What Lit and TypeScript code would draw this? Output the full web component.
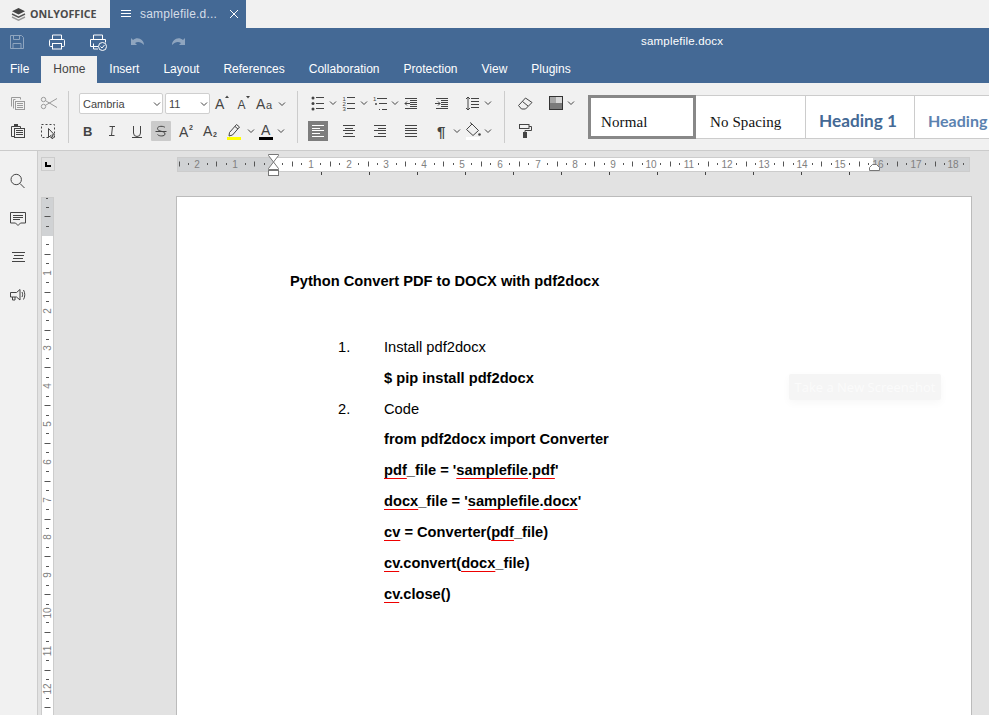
import { LitElement, html, css, svg } from "lit";
import { customElement } from "lit/decorators.js";

const CM = 37.8;

const box = (body: unknown, size = 20) =>
  html`<svg class="ic" width="${size}" height="${size}" viewBox="0 0 20 20">${body}</svg>`;

const lines = (rows: [number, number, number][]) =>
  svg`${rows.map(([x1, x2, y]) => svg`<path d="M${x1} ${y}.5H${x2}" />`)}`;

const letter = (t: string, x: number, y: number, size: number, extra = "") =>
  svg`<text x="${x}" y="${y}" font-size="${size}" class="${extra}">${t}</text>`;

const icons = {
  copy: box(svg`<path d="M3.500 13.500v-9h9v2" /><path d="M5.500 15.500v-9h2" /><rect x="7.500" y="8.500" width="9" height="8" />${lines([[9, 15, 10], [9, 15, 12], [9, 15, 14]])}`),
  cut: box(svg`<circle cx="5.500" cy="6.500" r="2.200" /><circle cx="5.500" cy="13.500" r="2.200" /><path d="M7.500 7.700 19 14.500M7.500 12.300 19 5.500" />`),
  paste: box(svg`<path d="M6 15.500H3.500V5.500h9v2" /><rect x="6" y="3" width="4" height="3" class="fill nostroke" /><rect x="6.500" y="7.500" width="10" height="9" />${lines([[8, 15, 9], [8, 15, 11], [8, 15, 13]])}`),
  select: box(svg`<rect x="3.500" y="3.500" width="13" height="13" stroke-dasharray="2 2" /><path d="M10.500 7.500v9l2-2 1.500 3.200 1.400-.7-1.500-3.100h2.600z" fill="#f1f1f1" />`),
  grow: box(svg`${letter("A", 4, 15, 14)}<path d="M14 4h4l-2-2.500z" class="fill nostroke" />`),
  shrink: box(svg`${letter("A", 4.500, 15, 12)}<path d="M13 2h4l-2 2.500z" class="fill nostroke" />`),
  change: box(svg`${letter("A", 1, 15, 14)}${letter("a", 11, 15, 11)}`),
  bold: box(svg`${letter("B", 5, 15, 13, "b")}`),
  italic: box(svg`<path d="M7.500 5.500h5.500M7 14.500h5.500M10.500 5.500l-1 9" />`),
  under: box(svg`<path d="M6.500 5v7a3.500 3.500 0 0 0 7 0V5M5 16.500h10" />`),
  strike: box(svg`<path d="M14 6.500c-1-1.500-7.500-2-7.500 1 0 3.500 7.500 2 7.500 5.500 0 2.500-6 2.500-7.500.5M4.500 10.500h11" />`),
  sup: box(svg`${letter("A", 4, 16, 14)}${letter("2", 14, 9, 7, "b")}`),
  sub: box(svg`${letter("A", 3, 15, 14)}${letter("2", 13, 16, 7, "b")}`),
  hi: box(svg`<path d="m5.500 11.500 7-8 3 2.500-7 8-3.500 1z" /><path d="m11 5.500 3 2.500" /><path d="M3 16h14v3H3z" fill="#ffff00" stroke="none" />`),
  color: box(svg`${letter("A", 5, 14, 14)}<path d="M3 16h14v3H3z" fill="#000" stroke="none" />`),
  bullets: box(svg`<circle cx="5" cy="5" r="1.500" class="fill nostroke" /><circle cx="5" cy="10.500" r="1.500" class="fill nostroke" /><circle cx="5" cy="16" r="1.500" class="fill nostroke" />${lines([[8, 16, 4], [8, 16, 10], [8, 16, 15]])}`),
  numbers: box(svg`${letter("1", 3.500, 8, 6)}${letter("2", 3.500, 13, 6)}${letter("3", 3.500, 18, 6)}${lines([[8, 16, 4], [8, 16, 10], [8, 16, 15]])}`),
  multi: box(svg`${letter("1", 3, 8, 6)}<circle cx="6" cy="11" r="1" class="fill nostroke" /><path d="M9 16.500h1" />${lines([[7, 17, 5], [9, 17, 10], [12, 17, 16]])}`),
  outdent: box(svg`${lines([[4, 16, 5], [9, 16, 7], [9, 16, 9], [9, 16, 11], [9, 16, 13], [4, 16, 15]])}<path d="M9 10.500H4M6 8.500l-2 2 2 2" />`),
  indent: box(svg`${lines([[4, 16, 5], [9, 16, 7], [9, 16, 9], [9, 16, 11], [9, 16, 13], [4, 16, 15]])}<path d="M3 10.500h5M6 8.500l2 2-2 2" />`),
  spacing: box(svg`${lines([[8, 16, 5], [8, 16, 8], [8, 16, 11], [8, 16, 14]])}<path d="M5 4v13M3 6l2-2 2 2M3 15l2 2 2-2" />`),
  left: box(svg`${lines([[4, 16, 4], [4, 12, 7], [4, 16, 9], [4, 12, 12], [4, 16, 15]])}`),
  center: box(svg`${lines([[4, 16, 4], [6, 14, 7], [4, 16, 9], [6, 14, 12], [4, 16, 15]])}`),
  right: box(svg`${lines([[4, 16, 4], [8, 16, 7], [4, 16, 9], [8, 16, 12], [4, 16, 15]])}`),
  justify: box(svg`${lines([[4, 16, 4], [4, 16, 7], [4, 16, 9], [4, 16, 12], [4, 16, 15]])}`),
  para: box(svg`${letter("¶", 5, 16, 15, "b")}`),
  shade: box(svg`<path d="m9 3 6.500 6.500-5.500 5-6.500-6z" /><path d="M9 3 7 1.500" /><circle cx="16.500" cy="13.500" r="1.300" class="fill nostroke" /><path d="M3 16h14v3H3z" fill="#fff" stroke="none" />`),
  eraser: box(svg`<path d="m3.500 12.500 7-7.500 6.500 4.500-6.500 6.500H6.500z" /><path d="m7.500 8.500 5.500 4.500" />`),
  scheme: box(svg`<rect x="3.500" y="3.500" width="13" height="13" stroke="#333" /><path d="M4 4h6v6H4z" fill="#a8a8a8" stroke="none" /><path d="M10 4h6v6h-6z" fill="#d8d8d8" stroke="none" /><path d="M4 10h12v6H4z" fill="#7a7a7a" stroke="none" />`),
  roller: box(svg`<rect x="4.500" y="3.500" width="9.500" height="4" /><path d="M14 5.500h2.500v4H10V11" /><rect x="8" y="11" width="4" height="6" class="fill nostroke" />`),
  search: box(svg`<circle cx="9.200" cy="8.500" r="5.200" /><path d="m13 12.500 4.500 4.500" />`),
  comment: box(svg`<path d="M3.500 3.500h15v10.500h-5l-2.500 2.500-2.500-2.500h-5z" />${lines([[6, 16, 6], [6, 16, 8], [6, 13, 10]])}`),
  nav: box(svg`${lines([[5, 18, 5], [7, 17, 8], [6, 16, 11], [5, 18, 14]])}`),
  speaker: box(svg`<path d="M3.500 7.500h6l3.500-3v10.500l-3.500-3h-6zM5.500 12v3H8v-3" /><path d="M15 7c.8 1.500.8 3.500 0 5M16.500 5c1.700 3 1.700 6.500 0 9.500" />`),
};

const topIcons = {
  save: box(svg`<path d="M3.500 3.500h11l2 2v11h-13z" /><path d="M6.500 3.500v4h6v-4M6 16.500v-5h8v5" />`),
  print: box(svg`<path d="M5.500 7V3h9v4" /><rect x="2.500" y="7.500" width="15" height="7" rx="1" /><rect x="5.500" y="11.500" width="9" height="5.500" fill="#446995" />`),
  quick: box(svg`<path d="M5.500 7V3h9v4" /><path d="M10 14.500H2.500v-7h15v3" /><path d="M5.500 11.500v5.500H10" /><circle cx="14.500" cy="14.500" r="4" /><path d="m12.500 14.500 1.500 1.500 2.500-3" />`),
  undo: box(svg`<path d="M3 6v7h6L7 11c3-2 6-1 9 2 0-5-6-9-11-5z" class="solid" />`),
  redo: box(svg`<path d="M17 6v7h-6l2-2c-3-2-6-1-9 2 0-5 6-9 11-5z" class="solid" />`),
};

const caret = html`<svg class="caret" width="10" height="20" viewBox="0 0 10 20"><path d="M2 8.500l3 3 3-3" /></svg>`;

const tabs = ["File", "Home", "Insert", "Layout", "References", "Collaboration", "Protection", "View", "Plugins"];

function hruler() {
  const ox = 96;
  const marks = [];
  for (let q = -10; q <= 74; q++) {
    const x = ox + (q * CM) / 4;
    if (x < 0.5 || x > 792) continue;
    if (q % 4 === 0) {
      if (q !== 0) marks.push(svg`<text x="${Math.round(x)}" y="15" class="num">${Math.abs(q / 4)}</text>`);
    } else {
      const h = q % 2 === 0 ? 5 : 2;
      marks.push(svg`<rect x="${Math.round(x)}" y="${11 - h / 2}" width="1" height="${h}" class="tick" />`);
    }
  }
  const stops = [];
  for (let i = 1; i <= 12; i++) stops.push(svg`<rect x="${ox + 48 * i}" y="19" width="1" height="3" class="stop" />`);
  return html`<svg class="hruler" width="794" height="25" viewBox="0 0 794 25">
    <rect x="0.500" y="4.500" width="792" height="14" class="gray" />
    <rect x="${ox}" y="5" width="600" height="13" fill="#fff" />
    ${marks}${stops}
    <path d="M91.500 1.500h10v1l-5 6.500-5-6.500z M91.500 16.500v-1l5-6.500 5 6.500v1z" class="marker" />
    <rect x="91.500" y="17.500" width="10" height="5" class="marker" />
    <path d="M692.500 17.500v-3l3-3h4l3 3v3z" class="marker" />
  </svg>`;
}

function vruler() {
  const oy = 38;
  const marks = [];
  for (let q = -3; q <= 51; q++) {
    const y = oy + (q * CM) / 4;
    if (q % 4 === 0) {
      if (q > 0 && q <= 48) marks.push(svg`<text transform="translate(10 ${Math.round(y)}) rotate(-90)" class="num">${q / 4}</text>`);
    } else {
      const w = q % 2 === 0 ? 6 : 3;
      marks.push(svg`<rect x="${6.500 - w / 2}" y="${Math.round(y)}" width="${w}" height="1" class="tick" />`);
    }
  }
  return html`<svg class="vruler" width="13" height="520" viewBox="0 0 13 520">
    <rect x="0.500" y="0.500" width="12" height="530" class="gray" />
    <rect x="1" y="${oy + 1}" width="11" height="500" fill="#fff" />
    <rect x="5" y="1" width="2" height="1" class="tick" />
    ${marks}
  </svg>`;
}

@customElement("app-root")
export class AppRoot extends LitElement {
  static styles = css`
    :host {
      display: block;
      width: 989px;
      height: 715px;
      overflow: hidden;
      position: relative;
      font-family: "Liberation Sans", Arial, sans-serif;
      font-size: 12px;
      color: #444;
      background: #e2e2e2;
    }
    .ic {
      display: block;
      flex: none;
      fill: none;
      stroke: #444;
      stroke-width: 1;
    }
    .ic text {
      fill: #444;
      stroke: none;
      font-family: "Liberation Sans", sans-serif;
    }
    .ic text.b {
      font-weight: 700;
    }
    .ic .fill {
      fill: #444;
    }
    .ic .nostroke {
      stroke: none;
    }
    .caret {
      display: block;
      flex: none;
      fill: none;
      stroke: #444;
    }

    .tabbar {
      height: 28px;
      display: flex;
      background: #f1f1f1;
    }
    .logo {
      width: 110px;
      display: flex;
      align-items: center;
      gap: 4px;
      padding-left: 11px;
      box-sizing: border-box;
      font: 700 10.700px "Open Sans", sans-serif;
      color: #4a4a4a;
    }
    .doctab {
      width: 136px;
      display: flex;
      align-items: center;
      padding-left: 11px;
      box-sizing: border-box;
      background: #446995;
      color: #d5dde8;
    }
    .doctab .name {
      width: 78px;
      margin-left: 9px;
      letter-spacing: 0.2px;
    }
    .doctab svg {
      stroke: #fff;
      fill: none;
      display: block;
    }
    .doctab .close {
      margin-left: 11px;
    }

    .titlebar {
      height: 28px;
      background: #446995;
      display: flex;
      align-items: center;
      position: relative;
      padding-left: 7px;
      gap: 20.300px;
    }
    .titlebar .ic {
      stroke: #fff;
    }
    .titlebar .off {
      opacity: 0.4;
    }
    .titlebar .solid {
      fill: #fff;
      stroke: none;
    }
    .doc-title {
      position: absolute;
      left: 641px;
      top: 7px;
      color: #fff;
      font-size: 11.500px;
      letter-spacing: 0.2px;
    }

    .menu {
      height: 27px;
      background: #446995;
      display: flex;
    }
    .menu div {
      padding: 0 12px;
      line-height: 27px;
      color: #fff;
    }
    .menu div:first-child {
      padding: 0 12px 0 10px;
    }
    .menu .on {
      background: #f1f1f1;
      color: #444;
    }

    .toolbar {
      height: 57px;
      padding-top: 10px;
      background: #f1f1f1;
      border-bottom: 1px solid #cbcbcb;
      display: flex;
      align-items: flex-start;
      overflow: hidden;
    }
    .sep {
      width: 1px;
      height: 52px;
      margin-top: -2px;
      background: #ccc;
      flex: none;
    }
    .clip {
      display: grid;
      grid-template-columns: 30px 30px;
      row-gap: 8px;
      margin: 0 5px 0 3px;
      justify-items: center;
    }
    .clip .dim .ic {
      stroke: #9a9a9a;
    }
    .fontgroup {
      margin-left: 10px;
      width: 218px;
      flex: none;
    }
    .row {
      display: flex;
      align-items: center;
    }
    .row.one {
      height: 21px;
      margin-bottom: 7px;
    }
    .combo {
      height: 21px;
      box-sizing: border-box;
      border: 1px solid #cfcfcf;
      border-radius: 2px;
      background: #fff;
      display: flex;
      align-items: center;
      justify-content: space-between;
      padding-left: 3px;
      font-size: 11px;
      color: #444;
    }
    .combo.name {
      width: 84px;
      margin-right: 2px;
    }
    .combo.size {
      width: 45px;
      margin-right: 1px;
    }
    .row.one > .ic {
      margin-right: 2px;
    }
    .row.one > .ic:last-of-type {
      margin-right: 0;
    }
    .row.two {
      margin-left: -3px;
    }
    .row.two .cell {
      width: 24.300px;
      display: flex;
      justify-content: center;
      flex: none;
    }
    .row.two .on .ic {
      background: #cbcbcb;
      border-radius: 1px;
    }
    .paragraph {
      display: grid;
      grid-template-columns: repeat(6, 31px);
      row-gap: 8px;
      margin: 0 10px;
      flex: none;
    }
    .cell31 {
      display: flex;
      width: 31px;
    }
    .cell31.on .ic {
      background: #7d7d7d;
      stroke: #fff;
    }
    .extras {
      display: grid;
      grid-template-columns: repeat(2, 31px);
      row-gap: 8px;
      margin-left: 10px;
      flex: none;
    }
    .gallery {
      display: flex;
      flex: none;
      height: 44px;
      margin: 2px 0 0 11px;
      background: #fff;
    }
    .style {
      height: 44px;
      box-sizing: border-box;
      border: 1px solid #ccc;
      border-left: 0;
      padding: 16px 0 0 14px;
      white-space: nowrap;
      overflow: hidden;
      color: #111;
      font: 15px/20px "Liberation Serif", serif;
      letter-spacing: 0.1px;
    }
    .style.active {
      width: 108px;
      border: 3px solid #888;
      padding: 14px 0 0 10px;
    }
    .style.nospace {
      width: 110px;
    }
    .style.h1 {
      width: 109px;
      padding: 15px 0 0 13px;
      color: #446995;
      letter-spacing: 0;
      font: 700 17.200px/20px Lato, sans-serif;
    }
    .style.h2 {
      width: 109px;
      padding: 15px 0 0 13px;
      color: #5b82b0;
      letter-spacing: 0;
      font: 700 16px/20px Lato, sans-serif;
    }

    .main {
      display: flex;
      height: 564px;
    }
    .side {
      width: 37px;
      flex: none;
      background: #f1f1f1;
      border-right: 1px solid #ccc;
      padding-top: 11px;
      box-sizing: content-box;
    }
    .side div {
      height: 38px;
      padding-right: 3px;
      display: flex;
      align-items: center;
      justify-content: center;
    }
    .work {
      flex: 1;
      min-width: 0;
    }
    .hrow {
      height: 43px;
      padding: 2px 0 0 3px;
      display: flex;
    }
    .corner {
      width: 14px;
      height: 14px;
      margin-top: 4px;
      border: 1px solid #ccc;
      box-sizing: border-box;
      position: relative;
      flex: none;
    }
    .corner::after {
      content: "";
      position: absolute;
      left: 3px;
      top: 4px;
      width: 4px;
      height: 3px;
      border-left: 2px solid #000;
      border-bottom: 2px solid #000;
    }
    .hruler {
      margin-left: 122px;
      display: block;
      flex: none;
    }
    .hruler .gray,
    .vruler .gray {
      fill: #d0d2d4;
      stroke: #ccc;
    }
    .num {
      font: 10px "Liberation Sans", sans-serif;
      fill: #808080;
      text-anchor: middle;
    }
    .tick {
      fill: #555;
    }
    .stop {
      fill: #444;
    }
    .marker {
      fill: #fff;
      stroke: #777;
    }
    .vrow {
      display: flex;
      padding-left: 3px;
    }
    .vruler {
      display: block;
      flex: none;
      margin-top: 1px;
    }
    .page {
      margin-left: 122px;
      width: 796px;
      height: 560px;
      flex: none;
      box-sizing: border-box;
      border: 1px solid #bbb;
      background: #fff;
      position: relative;
      padding: 68.500px 0 0 113px;
      font: 700 14.670px/30.900px "Liberation Sans", sans-serif;
      color: #000;
    }
    .title {
      margin-bottom: 35.350px;
    }
    .line {
      display: flex;
      font-weight: 400;
    }
    .line.b {
      font-weight: 700;
    }
    .no {
      width: 46px;
      margin-left: 48px;
      font-weight: 400;
    }
    .sp {
      text-decoration: underline #e00 1px;
      text-underline-offset: 3px;
    }
    .shot {
      position: absolute;
      left: 612px;
      top: 177px;
      width: 152px;
      height: 26px;
      background: #f5f5f5;
      border-radius: 2px;
      box-shadow: 0 3px 8px #f7f7f7;
      color: #fbfbfb;
      font: 13px/26px "Open Sans", sans-serif;
      text-align: center;
      white-space: nowrap;
    }
  `;

  render() {
    return html`
      <div class="tabbar">
        <div class="logo">
          <svg width="15" height="15" viewBox="0 0 15 15">
            <path d="M7.500 1 14 4.200 7.500 7.400 1 4.200z" fill="#444" />
            <path d="M1 7l6.500 3.200L14 7" fill="none" stroke="#555" stroke-width="1.400" />
            <path d="M1 10l6.500 3.200L14 10" fill="none" stroke="#999" stroke-width="1.400" />
          </svg>
          ONLYOFFICE
        </div>
        <div class="doctab">
          <svg width="10" height="10" viewBox="0 0 10 10"><path d="M0 1.500h10M0 4.500h10M0 7.500h10" /></svg>
          <span class="name">samplefile.d...</span>
          <svg class="close" width="10" height="10" viewBox="0 0 10 10"><path d="M1 1l8 8M9 1 1 9" /></svg>
        </div>
      </div>
      <div class="titlebar">
        <span class="off">${topIcons.save}</span>
        <span>${topIcons.print}</span>
        <span>${topIcons.quick}</span>
        <span class="off">${topIcons.undo}</span>
        <span class="off">${topIcons.redo}</span>
        <div class="doc-title">samplefile.docx</div>
      </div>
      <div class="menu">
        ${tabs.map((t) => html`<div class=${t === "Home" ? "on" : ""}>${t}</div>`)}
      </div>
      <div class="toolbar">
        <div class="clip">
          <span class="dim">${icons.copy}</span>
          <span class="dim">${icons.cut}</span>
          ${icons.paste} ${icons.select}
        </div>
        <div class="sep"></div>
        <div class="fontgroup">
          <div class="row one">
            <div class="combo name">Cambria ${caret}</div>
            <div class="combo size">11 ${caret}</div>
            ${icons.grow} ${icons.shrink} ${icons.change} ${caret}
          </div>
          <div class="row two">
            ${[icons.bold, icons.italic, icons.under].map((i) => html`<div class="cell">${i}</div>`)}
            <div class="cell on">${icons.strike}</div>
            <div class="cell">${icons.sup}</div>
            <div class="cell">${icons.sub}</div>
            <div class="cell">${icons.hi}</div>
            ${caret}
            ${icons.color} ${caret}
          </div>
        </div>
        <div class="sep"></div>
        <div class="paragraph">
          <div class="cell31">${icons.bullets}${caret}</div>
          <div class="cell31">${icons.numbers}${caret}</div>
          <div class="cell31">${icons.multi}${caret}</div>
          <div class="cell31">${icons.outdent}</div>
          <div class="cell31">${icons.indent}</div>
          <div class="cell31">${icons.spacing}${caret}</div>
          <div class="cell31 on">${icons.left}</div>
          <div class="cell31">${icons.center}</div>
          <div class="cell31">${icons.right}</div>
          <div class="cell31">${icons.justify}</div>
          <div class="cell31">${icons.para}${caret}</div>
          <div class="cell31">${icons.shade}${caret}</div>
        </div>
        <div class="sep"></div>
        <div class="extras">
          <div class="cell31">${icons.eraser}</div>
          <div class="cell31">${icons.scheme}${caret}</div>
          <div class="cell31">${icons.roller}</div>
        </div>
        <div class="gallery">
          <div class="style active">Normal</div>
          <div class="style nospace">No Spacing</div>
          <div class="style h1">Heading 1</div>
          <div class="style h2">Heading</div>
        </div>
      </div>
      <div class="main">
        <div class="side">
          <div>${icons.search}</div>
          <div>${icons.comment}</div>
          <div>${icons.nav}</div>
          <div>${icons.speaker}</div>
        </div>
        <div class="work">
          <div class="hrow">
            <div class="corner"></div>
            ${hruler()}
          </div>
          <div class="vrow">
            ${vruler()}
            <div class="page">
              <div class="title">Python Convert PDF to DOCX with pdf2docx</div>
              <div class="line"><span class="no">1.</span><span>Install pdf2docx</span></div>
              <div class="line b"><span class="no"></span><span>$ pip install pdf2docx</span></div>
              <div class="line"><span class="no">2.</span><span>Code</span></div>
              <div class="line b"><span class="no"></span><span>from pdf2docx import Converter</span></div>
              <div class="line b"><span class="no"></span><span><span class="sp">pdf</span>_file = '<span class="sp">samplefile</span>.<span class="sp">pdf</span>'</span></div>
              <div class="line b"><span class="no"></span><span><span class="sp">docx</span>_file = '<span class="sp">samplefile</span>.<span class="sp">docx</span>'</span></div>
              <div class="line b"><span class="no"></span><span><span class="sp">cv</span> = Converter(<span class="sp">pdf</span>_file)</span></div>
              <div class="line b"><span class="no"></span><span><span class="sp">cv</span>.convert(<span class="sp">docx</span>_file)</span></div>
              <div class="line b"><span class="no"></span><span><span class="sp">cv</span>.close()</span></div>
              <div class="shot">Take a New Screenshot</div>
            </div>
          </div>
        </div>
      </div>
    `;
  }
}
